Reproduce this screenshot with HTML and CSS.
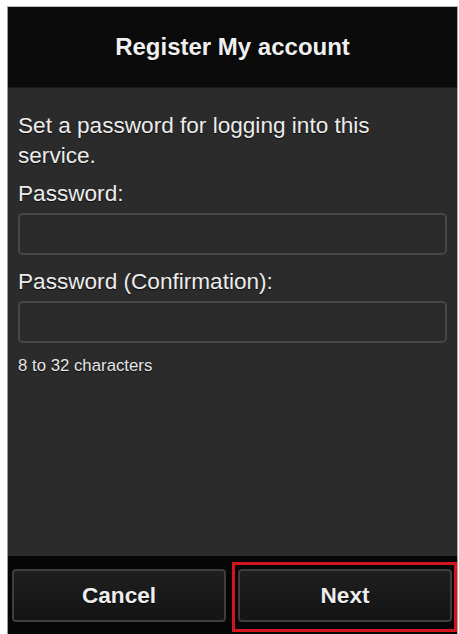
FILE: index.html
```html
<!DOCTYPE html>
<html lang="en">
<head>
<meta charset="utf-8">
<title>Register My account</title>
<link rel="stylesheet" href="styles.css">
</head>
<body>
<div class="frame">
  <header class="header">
    <h1 class="title">Register My account</h1>
  </header>
  <main class="content">
    <p class="intro">Set a password for logging into this service.</p>
    <label class="label" for="pw">Password:</label>
    <input class="field" id="pw" type="password">
    <label class="label label-second" for="pw2">Password (Confirmation):</label>
    <input class="field" id="pw2" type="password">
    <p class="hint">8 to 32 characters</p>
  </main>
  <footer class="footer">
    <button class="btn btn-cancel" type="button">Cancel</button>
    <div class="highlight">
      <button class="btn btn-next" type="button">Next</button>
    </div>
  </footer>
</div>
</body>
</html>
```

FILE: styles.css
```css
html, body {
  margin: 0;
  padding: 0;
  background: #ffffff;
  height: 634px;
  overflow: hidden;
}

.frame {
  margin: 6px 1px 0 7px;
  width: 449px;
  border-left: 1px solid #9a9a9a;
  border-right: 1px solid #a8a8a8;
  border-top: 1px solid #bdbdbd;
  font-family: "Liberation Sans", Arial, sans-serif;
  color: #ececec;
  text-shadow: 0 1px 1px rgba(0, 0, 0, 0.7);
}

.header {
  height: 81px;
  background: #0b0b0b;
  display: flex;
  align-items: center;
  justify-content: center;
  border-bottom: 1px solid #1a1a1a;
  box-sizing: border-box;
}

.title {
  margin: 0;
  font-size: 24px;
  font-weight: bold;
  color: #f0f0f0;
}

.content {
  height: 468px;
  box-sizing: border-box;
  background: #2b2b2b;
  padding: 23px 10px 0 10px;
  display: flex;
  flex-direction: column;
}

.intro {
  margin: 0;
  font-size: 22.6px;
  line-height: 30px;
  padding-right: 60px;
}

.label {
  display: block;
  font-size: 22.6px;
  line-height: 30px;
  margin-top: 8px;
}

.label-second {
  margin-top: 12px;
}

.field {
  display: block;
  box-sizing: border-box;
  width: 100%;
  height: 42px;
  margin: 4px 0 0 0;
  background: #2a2a2a;
  border: 2px solid #484848;
  border-radius: 5px;
  outline: none;
}

.hint {
  margin: 13px 0 0 0;
  font-size: 16.8px;
  line-height: 20px;
  color: #e6e6e6;
}

.footer {
  height: 80px;
  background: #060606;
  display: flex;
  align-items: flex-start;
  padding-left: 4px;
  box-sizing: border-box;
}

.btn {
  display: block;
  height: 53px;
  width: 214px;
  box-sizing: border-box;
  background: linear-gradient(#1f1f1f, #141414);
  border: 2px solid #3e3e3e;
  border-radius: 4px;
  font-family: "Liberation Sans", Arial, sans-serif;
  font-size: 22.6px;
  font-weight: bold;
  color: #eeeeee;
  text-shadow: 0 1px 1px rgba(0, 0, 0, 0.8);
  padding: 0;
}

.btn-cancel {
  margin-top: 13px;
}

.highlight {
  margin-top: 6px;
  margin-left: 6px;
  width: 225px;
  box-sizing: border-box;
  border: 3px solid #d4151f;
  padding: 4px 2px 7px 3px;
}
```
